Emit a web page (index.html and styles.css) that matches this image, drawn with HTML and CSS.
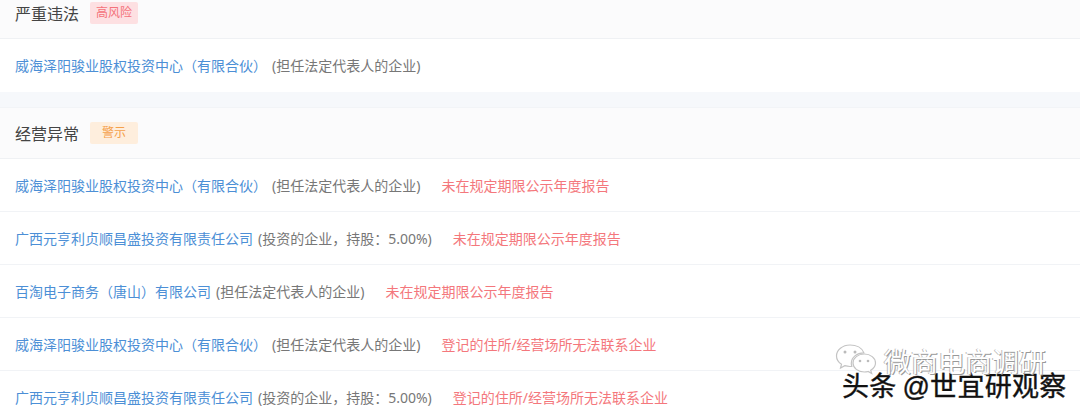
FILE: index.html
```html
<!DOCTYPE html>
<html lang="en">

<head>
  <meta charset="UTF-8">
  <meta name="viewport" content="width=device-width, initial-scale=1.0">
  <title>风险信息</title>
  <link rel="stylesheet" href="styles.css">
</head>

<body>
  <div class="page">
    <!-- 严重违法 -->
    <section class="risk-block first">
      <div class="risk-head">
        <h3>严重违法</h3>
        <span class="tag tag-high">高风险</span>
      </div>
      <div class="risk-row">
        <a class="company">威海泽阳骏业股权投资中心（有限合伙）</a>
        <span class="note">(担任法定代表人的企业)</span>
      </div>
    </section>

    <!-- 经营异常 -->
    <section class="risk-block">
      <div class="risk-head">
        <h3>经营异常</h3>
        <span class="tag tag-warn">警示</span>
      </div>
      <div class="risk-row">
        <a class="company">威海泽阳骏业股权投资中心（有限合伙）</a>
        <span class="note">(担任法定代表人的企业)</span>
        <span class="reason">未在规定期限公示年度报告</span>
      </div>
      <div class="risk-row">
        <a class="company">广西元亨利贞顺昌盛投资有限责任公司</a>
        <span class="note">(投资的企业，持股：5.00%)</span>
        <span class="reason">未在规定期限公示年度报告</span>
      </div>
      <div class="risk-row">
        <a class="company">百淘电子商务（唐山）有限公司</a>
        <span class="note">(担任法定代表人的企业)</span>
        <span class="reason">未在规定期限公示年度报告</span>
      </div>
      <div class="risk-row">
        <a class="company">威海泽阳骏业股权投资中心（有限合伙）</a>
        <span class="note">(担任法定代表人的企业)</span>
        <span class="reason">登记的住所/经营场所无法联系企业</span>
      </div>
      <div class="risk-row">
        <a class="company">广西元亨利贞顺昌盛投资有限责任公司</a>
        <span class="note">(投资的企业，持股：5.00%)</span>
        <span class="reason">登记的住所/经营场所无法联系企业</span>
      </div>
    </section>
  </div>

  <!-- Watermark -->
  <div class="watermark">
    <div class="wm-top">
      <svg class="wm-icon" width="42" height="32" viewBox="0 0 42 32" fill="#fff" stroke="#c4c4c4" stroke-width="1.2">
        <path d="M15 1C7.500 1 1.500 6 1.500 12c0 3.400 2 6.300 5 8.300L5.500 24l4.300-2.300c1.700.5 3.400.8 5.200.8.600 0 1.200 0 1.800-.1-.3-1-.5-2-.5-3 0-6 5.500-10.600 12.500-10.600C27 4 21.500 1 15 1z" />
        <path d="M40.500 19c0-5-5-9-11.200-9S18 14 18 19s5 9 11.300 9c1.300 0 2.600-.2 3.800-.5l3.600 2-1-3.200c3-1.800 4.800-4.300 4.800-7.300z" />
        <circle cx="10" cy="8" r="1.500" fill="#bbb" stroke="none" />
        <circle cx="20" cy="8" r="1.500" fill="#bbb" stroke="none" />
        <circle cx="25" cy="17" r="1.300" fill="#bbb" stroke="none" />
        <circle cx="33" cy="17" r="1.300" fill="#bbb" stroke="none" />
      </svg>
      <span class="wm-name">微商电商调研</span>
    </div>
    <div class="wm-source">头条 @世宜研观察</div>
  </div>
</body>

</html>
```

FILE: styles.css
```css
/* General Styles */
html,
body {
  margin: 0;
  height: 413px;
  overflow: hidden;
}

body {
  position: relative;
  font-family: "Noto Sans", "Noto Sans CJK SC", sans-serif;
  background-color: #fff;
}

.page {
  margin-top: -13px;
}

/* Blocks */
.risk-block {
  background-color: #fff;
  border-top: 1px solid #f2f4f7;
}

.risk-block.first {
  border-top: none;
  padding-bottom: 15px;
  background: linear-gradient(#fff 105px, #f6f8fb 105px);
}

.risk-head {
  display: flex;
  align-items: center;
  height: 51px;
  padding-left: 15px;
  background-color: #fbfbfc;
  border-bottom: 1px solid #eff1f4;
}

.risk-block + .risk-block .risk-head {
  height: 50px;
}

.risk-head h3 {
  margin: 0;
  width: 75px;
  font-size: 16px;
  font-weight: normal;
  color: #444;
}

.tag {
  width: 48px;
  height: 22px;
  line-height: 22px;
  text-align: center;
  font-size: 12px;
  border-radius: 2px;
}

.tag-high {
  background-color: #fde0e2;
  color: #f4727a;
}

.tag-warn {
  background-color: #feeedd;
  color: #f5a04a;
}

/* Rows */
.risk-row {
  display: flex;
  align-items: center;
  height: 52px;
  padding-left: 15px;
  font-size: 14px;
  border-bottom: 1px solid #f1f3f6;
  white-space: pre;
}

.risk-block.first .risk-row {
  border-bottom: none;
  height: 51px;
  padding-bottom: 2px;
}

.company {
  color: #4c8fd6;
}

.note {
  margin-left: 5px;
  color: #777;
}

.reason {
  margin-left: 21px;
  color: #f4777c;
}

/* Watermark */
.watermark {
  position: absolute;
  left: 835px;
  top: 344px;
}

.wm-top {
  display: flex;
  align-items: center;
  gap: 7px;
}

.wm-name {
  position: relative;
  top: 2px;
  font-size: 27px;
  line-height: 32px;
  color: #fff;
  text-shadow: 1px 1px 0 #999, -1px 0 0 #bbb;
}

.wm-source {
  margin-top: -5px;
  margin-left: 7px;
  font-family: "Liberation Sans", "Noto Sans CJK SC", sans-serif;
  font-size: 27px;
  line-height: 32px;
  color: #111;
  white-space: pre;
  word-spacing: -2px;
  letter-spacing: 0.3px;
  -webkit-text-stroke: 0.4px #111;
  text-shadow: 1px 1px 0 #fff, -1px -1px 0 #fff, 1px -1px 0 #fff, -1px 1px 0 #fff;
}
```
